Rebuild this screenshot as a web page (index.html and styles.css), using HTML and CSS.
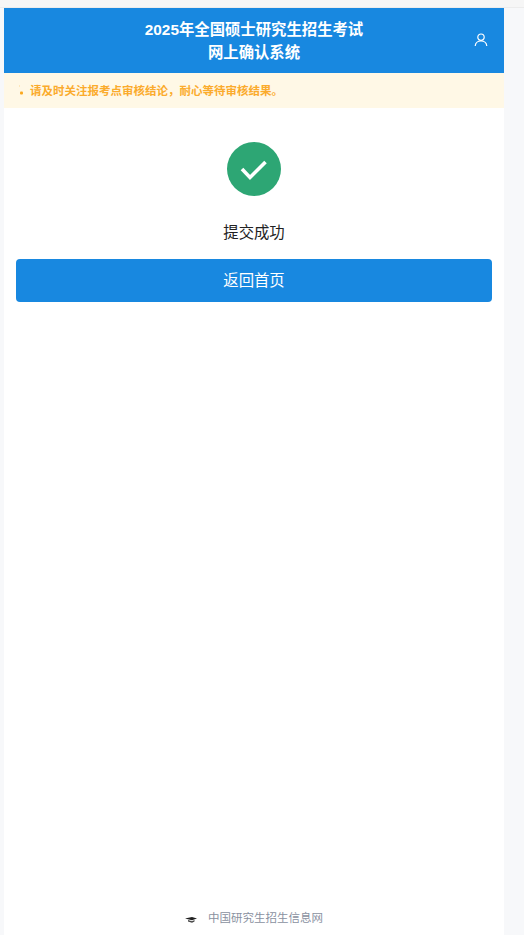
FILE: index.html
```html
<!DOCTYPE html>
<html lang="zh-CN">
<head>
    <meta charset="UTF-8">
    <meta name="viewport" content="width=device-width, initial-scale=1.0">
    <title>网上确认系统</title>
    <link rel="stylesheet" href="styles.css">
</head>
<body>

<div class="top-strip"></div>

<div class="app">
    <header class="app-header">
        <h1>2025年全国硕士研究生招生考试<br>网上确认系统</h1>
        <svg class="user-icon" viewBox="0 0 14 14" width="14" height="14" fill="none" stroke="#fff" stroke-width="1.2">
            <circle cx="7" cy="4.2" r="3.2"/>
            <path d="M1.2 13c.3-3 2.6-5 5.800-5s5.500 2 5.800 5"/>
        </svg>
    </header>

    <div class="notice">
        <svg class="notice-icon" viewBox="0 0 6 10" width="6" height="10">
            <rect x="2" y="0.500" width="1" height="1" fill="#fdd68f"/>
            <rect x="3" y="6.500" width="3" height="3" rx="1" fill="#fba81f"/>
        </svg>
        <span>请及时关注报考点审核结论，耐心等待审核结果。</span>
    </div>

    <main class="result">
        <div class="result-icon">
            <svg viewBox="0 0 54 54" width="54" height="54">
                <circle cx="27" cy="27" r="27" fill="#2da674"/>
                <path d="M15 27l8 8.500 15.500-15.500" fill="none" stroke="#fff" stroke-width="3.600"/>
            </svg>
        </div>
        <p class="result-text">提交成功</p>
        <button class="home-btn">返回首页</button>
    </main>

    <footer class="app-footer">
        <svg class="cap-icon" viewBox="0 0 12 7" width="12" height="7">
            <path d="M0 2.500L7 1l5 1.500-5 1.800z" fill="#222"/>
            <path d="M3 4l4 1.300L9.500 4v1.500L7 6.800 3 5.500z" fill="#444"/>
        </svg>
        <span>中国研究生招生信息网</span>
    </footer>
</div>

</body>
</html>
```

FILE: styles.css
```css
html, body {
    margin: 0;
    padding: 0;
    height: 100%;
}
body {
    font-family: "Liberation Sans", "Noto Sans CJK SC", sans-serif;
    background-color: #f7f8fa;
    overflow: hidden;
}
.top-strip {
    height: 7px;
    background-color: #f6f6f6;
    border-bottom: 1px solid #ececec;
}
.app {
    width: 500px;
    height: 927px;
    margin-left: 4px;
    background-color: #fff;
    display: flex;
    flex-direction: column;
}
.app-header {
    background-color: #1888e0;
    color: #fff;
    height: 65px;
    display: flex;
    align-items: center;
    justify-content: center;
    position: relative;
    flex-shrink: 0;
}
.app-header h1 {
    margin: 0;
    font-size: 15.360px;
    line-height: 23px;
    font-weight: bold;
    text-align: center;
}
.user-icon {
    position: absolute;
    right: 16px;
    top: 25px;
}
.notice {
    height: 33px;
    padding-bottom: 2px;
    background-color: #fff8e6;
    color: #fbab2c;
    font-size: 11.500px;
    font-weight: bold;
    padding-left: 13px;
    display: flex;
    align-items: center;
    gap: 7px;
    flex-shrink: 0;
}
.result {
    flex: 1;
    display: flex;
    flex-direction: column;
    align-items: center;
    padding: 34px 12px 0;
}
.result-icon {
    height: 54px;
    line-height: 0;
}
.result-text {
    margin: 26px 0 15px;
    font-size: 15.360px;
    line-height: 22px;
    color: #222;
}
.home-btn {
    width: 100%;
    height: 43px;
    padding: 0 0 3px;
    border: none;
    border-radius: 4px;
    background-color: #1888e0;
    color: #fff;
    font-family: inherit;
    font-size: 15.360px;
    cursor: pointer;
}
.app-footer {
    height: 25px;
    display: flex;
    align-items: flex-start;
    justify-content: center;
    gap: 11px;
    font-size: 11.500px;
    line-height: 17px;
    color: #8a919f;
}
.cap-icon {
    margin-top: 6px;
}
```
